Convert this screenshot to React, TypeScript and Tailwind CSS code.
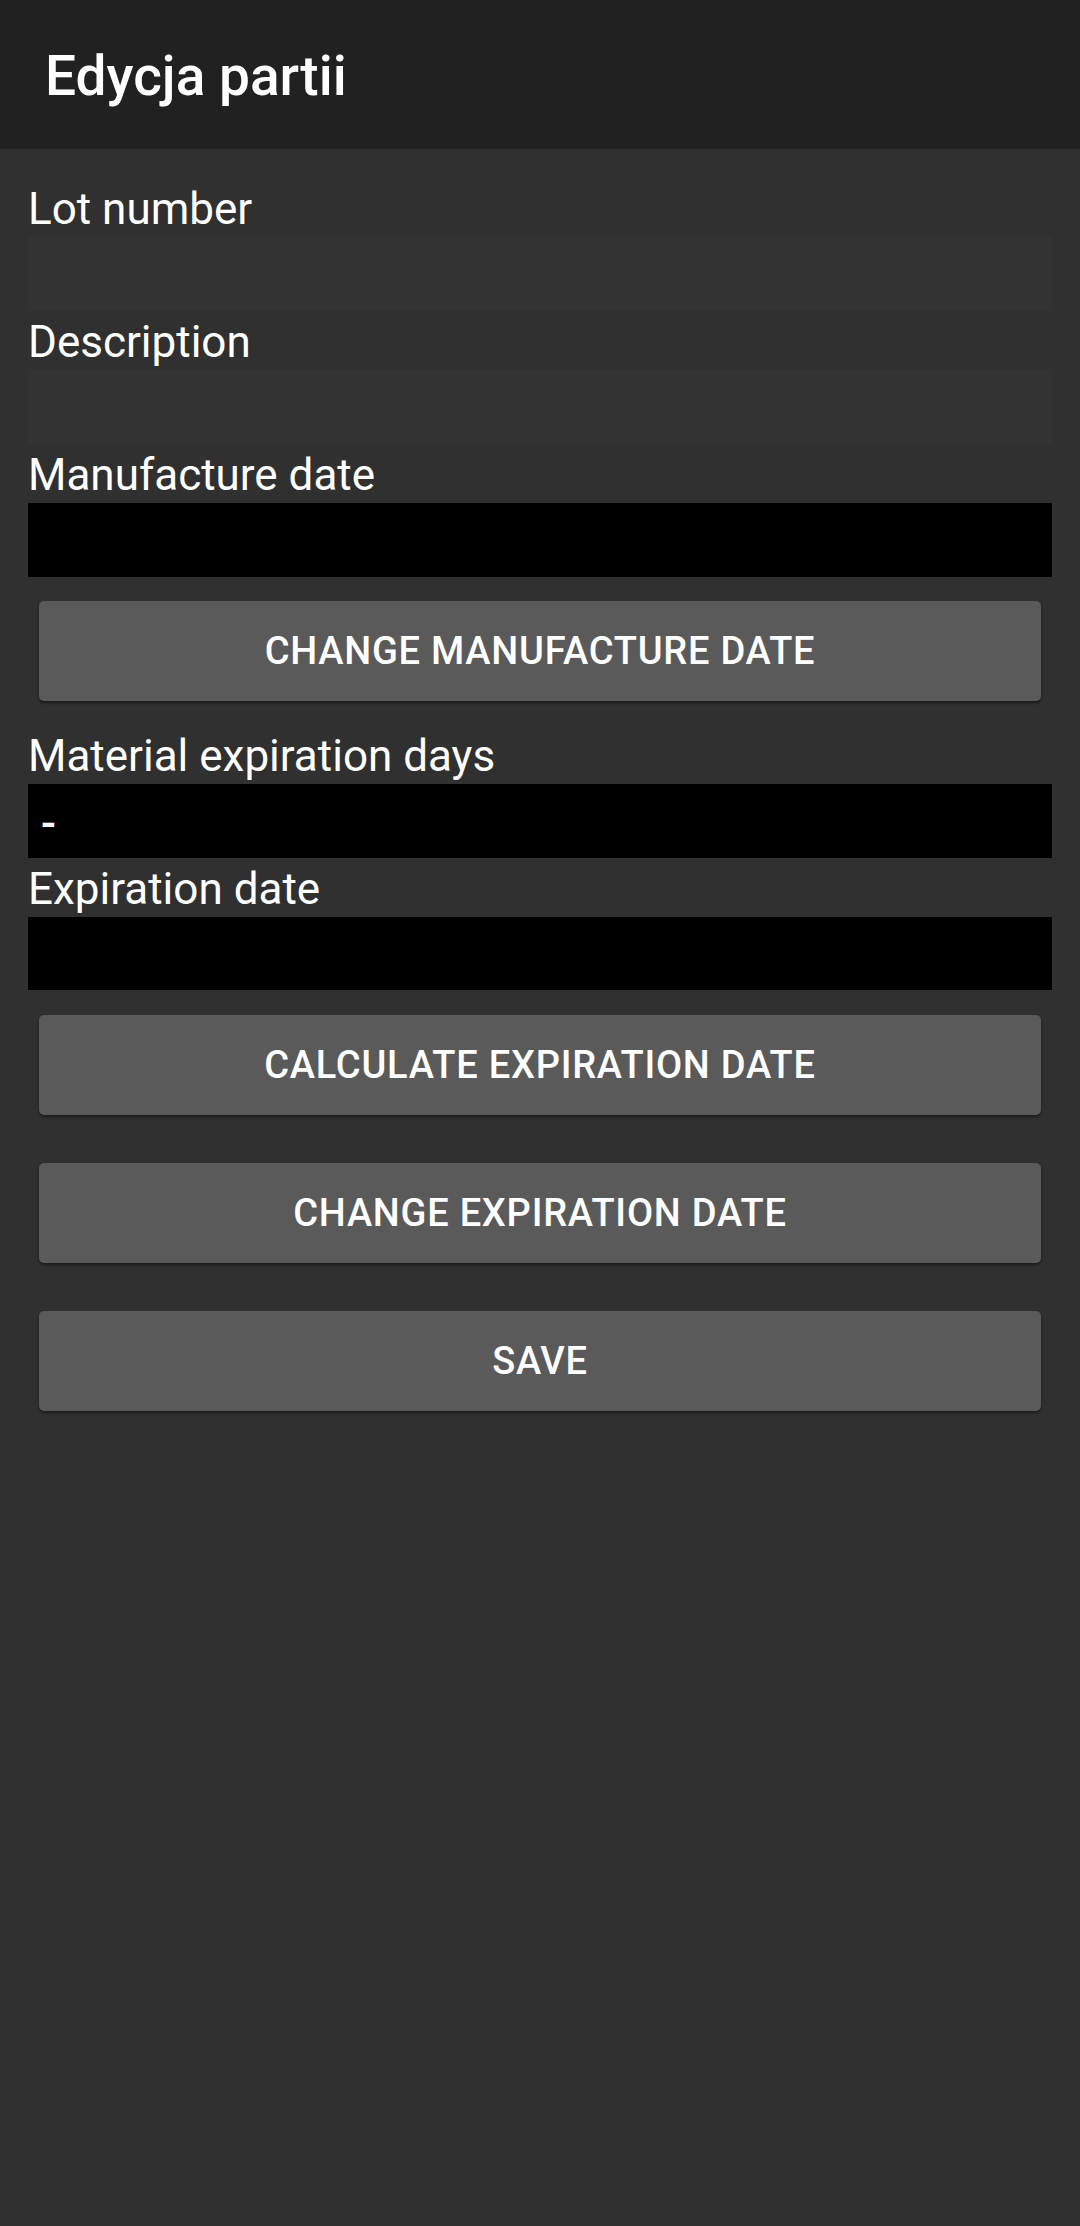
import React from "react";

function Label({ text, pt }: { text: string; pt: string }) {
  return (
    <div className={`${pt} text-[44px] leading-[53px] text-white`}>{text}</div>
  );
}

function Btn({ text, className }: { text: string; className: string }) {
  return (
    <div
      className={`${className} mx-[11px] h-[100px] rounded-[5px] bg-[#5a5a5b] shadow-[0_2px_3px_rgba(0,0,0,0.45)] flex items-center justify-center text-white text-[38px] font-medium tracking-[0.02em] uppercase`}
    >
      {text}
    </div>
  );
}

export default function App() {
  return (
    <div className="min-h-[2226px] bg-[#303030] font-['Roboto',sans-serif]">
      <div className="h-[149px] bg-[#212121] flex items-center px-[45px]">
        <div className="text-white text-[55px] font-medium leading-[66px] pt-[2px]">Edycja partii</div>
      </div>
      <div className="px-[28px] pt-[34px] flex flex-col">
        <div className="h-[54px] text-[44px] leading-[53px] text-white">Lot number</div>
        <div className="h-[73px] bg-[#333333]" />
        <div className="h-[60px]">
          <Label text="Description" pt="pt-[6px]" />
        </div>
        <div className="h-[74px] bg-[#333333]" />
        <div className="h-[59px]">
          <Label text="Manufacture date" pt="pt-[5px]" />
        </div>
        <div className="h-[74px] bg-black" />
        <Btn text="Change manufacture date" className="mt-[24px]" />
        <div className="h-[60px] mt-[23px]">
          <Label text="Material expiration days" pt="pt-[6px]" />
        </div>
        <div className="h-[74px] bg-black flex items-center pl-[13px] pt-[4px] text-white text-[44px] font-medium leading-[53px]">
          -
        </div>
        <div className="h-[59px]">
          <Label text="Expiration date" pt="pt-[5px]" />
        </div>
        <div className="h-[73px] bg-black" />
        <Btn text="Calculate expiration date" className="mt-[25px]" />
        <Btn text="Change expiration date" className="mt-[48px]" />
        <Btn text="Save" className="mt-[48px]" />
      </div>
    </div>
  );
}
